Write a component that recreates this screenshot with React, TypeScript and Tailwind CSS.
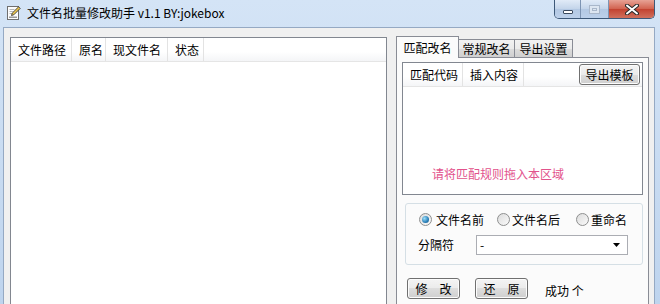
import React from 'react';

const cjk = "font-['Noto_Sans_CJK_SC',sans-serif]";

function AppIcon() {
  return (
    <svg width="16" height="16" viewBox="0 0 16 16">
      <rect x="1.5" y="1.5" width="11" height="13" fill="#fdfdfd" stroke="#6f6f6f" />
      <path d="M3.5 4.5h5M3.5 6.5h4M3.5 8.5h5" stroke="#b8b8b8" />
      <path d="M12.6 1.8l1.6 1.6-6.4 6.4-2.3.7.7-2.3z" fill="#f0c84a" stroke="#3a3a3a" strokeWidth="0.9" />
      <rect x="3" y="11.5" width="8" height="1.5" fill="#9a9a9a" />
    </svg>
  );
}

function WinButtons() {
  return (
    <div className="flex h-[19px] rounded-b-[5px] border border-t-0 border-[#3d5878] overflow-hidden">
      <div className="w-[26px] flex items-end justify-center pb-[4px] bg-[linear-gradient(to_bottom,#e1ebf7,#c3d4ea_50%,#b3c8e3_50%,#bcd0ea)] border-r border-[#7d94b3]">
        <div className="w-[10px] h-[4px] bg-white border border-[#3b4a5e] rounded-[1px]" />
      </div>
      <div className="w-[28px] flex items-center justify-center bg-[linear-gradient(to_bottom,#e1ebf7,#c3d4ea_50%,#b3c8e3_50%,#bcd0ea)] border-r border-[#7d94b3]">
        <div className="w-[11px] h-[9px] border border-[#a9b7ca] bg-[#dde6f1] flex items-center justify-center">
          <div className="w-[5px] h-[3px] border border-[#a9b7ca]" />
        </div>
      </div>
      <div className="w-[45px] flex items-center justify-center bg-[linear-gradient(to_bottom,#e7a295,#d1614e_50%,#c2412f_50%,#d0705d)]">
        <svg width="14" height="11" viewBox="0 0 14 11">
          <path d="M2 1.5l10 8M12 1.5l-10 8" stroke="#2b2b2b" strokeWidth="4" strokeLinecap="round" />
          <path d="M2 1.5l10 8M12 1.5l-10 8" stroke="#ffffff" strokeWidth="2" strokeLinecap="round" />
        </svg>
      </div>
    </div>
  );
}

function Radio({ checked }: { checked?: boolean }) {
  return (
    <span className="w-[13px] h-[13px] rounded-full border border-[#8e8f8f] bg-[linear-gradient(135deg,#dcdcdc,#fafafa)] flex items-center justify-center shrink-0">
      {checked && (
        <span className="w-[7px] h-[7px] rounded-full bg-[radial-gradient(circle_at_35%_35%,#9ee0fb,#2a7fb8_60%,#14507e)]" />
      )}
    </span>
  );
}

function Btn({ children, className }: { children: React.ReactNode; className?: string }) {
  return (
    <div
      className={
        'h-[21px] rounded-[3px] border border-[#707070] bg-[linear-gradient(to_bottom,#f4f4f4,#ebebeb_50%,#dddddd_50%,#cfcfcf)] flex items-center justify-center text-[12px] text-black whitespace-pre shadow-[inset_0_0_0_1px_#fcfcfc] ' +
        (className ?? '')
      }
    >
      {children}
    </div>
  );
}

function HeaderCol({ label, width }: { label: string; width: number }) {
  return (
    <div
      className="h-full flex items-center pl-[7px] border-r border-[#e3e3e3] text-[12px] text-black whitespace-nowrap"
      style={{ width }}
    >
      {label}
    </div>
  );
}

export default function App() {
  return (
    <div className={`w-[660px] h-[304px] overflow-hidden flex flex-col bg-[linear-gradient(to_bottom,#d4e4f6,#bed4ee)] ${cjk}`}>
      {/* Title bar */}
      <div className="h-[27px] flex items-start shrink-0">
        <div className="ml-[6px] mt-[5px]">
          <AppIcon />
        </div>
        <div className="ml-[5px] h-[25px] flex items-center text-[12px] text-black">文件名批量修改助手 v1.1 BY:jokebox</div>
        <div className="ml-auto mr-[5px]">
          <WinButtons />
        </div>
      </div>

      {/* Client */}
      <div className="flex-1 ml-[3px] w-[652px] flex bg-[#f0f0f0] border border-b-0 border-[#95a9c3]">
        {/* File list */}
        <div className="ml-[6px] mt-[9px] w-[377px] h-[300px] border border-[#828790] bg-white shrink-0">
          <div className="h-[24px] flex bg-[linear-gradient(to_bottom,#ffffff,#ffffff_60%,#f4f5f7)] border-b border-[#e5e5e5]">
            <HeaderCol label="文件路径" width={61} />
            <HeaderCol label="原名" width={34} />
            <HeaderCol label="现文件名" width={62} />
            <HeaderCol label="状态" width={36} />
          </div>
        </div>

        {/* Tab control */}
        <div className="ml-[9px] mt-[8px] w-[253px] flex flex-col shrink-0">
          <div className="h-[21px] flex items-end">
            <div className="w-[63px] h-[22px] -mb-px relative z-10 border border-b-0 border-[#898c95] bg-[#fbfbfb] flex items-center justify-center text-[12px] text-black">
              匹配改名
            </div>
            <div className="w-[57px] h-[18px] -ml-px border border-b-0 border-[#898c95] bg-[linear-gradient(to_bottom,#f2f2f2,#ebebeb_50%,#dddddd_50%,#cfcfcf)] flex items-center justify-center text-[12px] text-black">
              常规改名
            </div>
            <div className="w-[59px] h-[18px] -ml-px border border-b-0 border-[#898c95] bg-[linear-gradient(to_bottom,#f2f2f2,#ebebeb_50%,#dddddd_50%,#cfcfcf)] flex items-center justify-center text-[12px] text-black">
              导出设置
            </div>
          </div>

          <div className="flex-1 border border-b-0 border-[#898c95] bg-[#fbfbfb] pt-[4px] px-[5px] flex flex-col">
            {/* Rule list */}
            <div className="w-[241px] h-[133px] border border-[#828790] bg-white relative shrink-0">
              <div className="h-[24px] flex bg-[linear-gradient(to_bottom,#ffffff,#ffffff_60%,#f4f5f7)] border-b border-[#e5e5e5]">
                <HeaderCol label="匹配代码" width={60} />
                <HeaderCol label="插入内容" width={61} />
              </div>
              <Btn className="absolute left-[176px] top-[1px] w-[61px]">导出模板</Btn>
              <div className="mt-[79px] pl-[29px] h-[16px] flex items-center text-[12px] text-[#e2528c]">请将匹配规则拖入本区域</div>
            </div>

            {/* Options group */}
            <div className="mt-[8px] ml-[3px] w-[238px] h-[62px] border border-[#d5dfe5] rounded-[3px] flex flex-col shrink-0">
              <div className="mt-[9px] h-[13px] flex items-center text-[12px] text-black">
                <div className="ml-[13px] w-[78px] flex items-center gap-[4px]">
                  <Radio checked />
                  <span>文件名前</span>
                </div>
                <div className="w-[79px] flex items-center gap-[1px]">
                  <Radio />
                  <span className="ml-[1px]">文件名后</span>
                </div>
                <div className="flex items-center gap-[2px]">
                  <Radio />
                  <span>重命名</span>
                </div>
              </div>
              <div className="mt-[9px] h-[20px] flex items-center text-[12px] text-black">
                <span className="ml-[12px] w-[58px]">分隔符</span>
                <div className="w-[152px] h-[20px] border border-[#abadb3] bg-white flex items-center pl-[3px] pr-[7px]">
                  <span className="leading-none">-</span>
                  <svg className="ml-auto" width="7" height="4" viewBox="0 0 7 4">
                    <path d="M0 0h7L3.5 4z" fill="#000" />
                  </svg>
                </div>
              </div>
            </div>

            {/* Actions */}
            <div className="mt-[12px] ml-[5px] flex items-center">
              <Btn className="w-[53px]">修　改</Btn>
              <Btn className="ml-[15px] w-[53px]">还　原</Btn>
              <span className="ml-[17px] mt-[5px] text-[12px] text-black">成功 个</span>
            </div>
          </div>
        </div>
      </div>
    </div>
  );
}
